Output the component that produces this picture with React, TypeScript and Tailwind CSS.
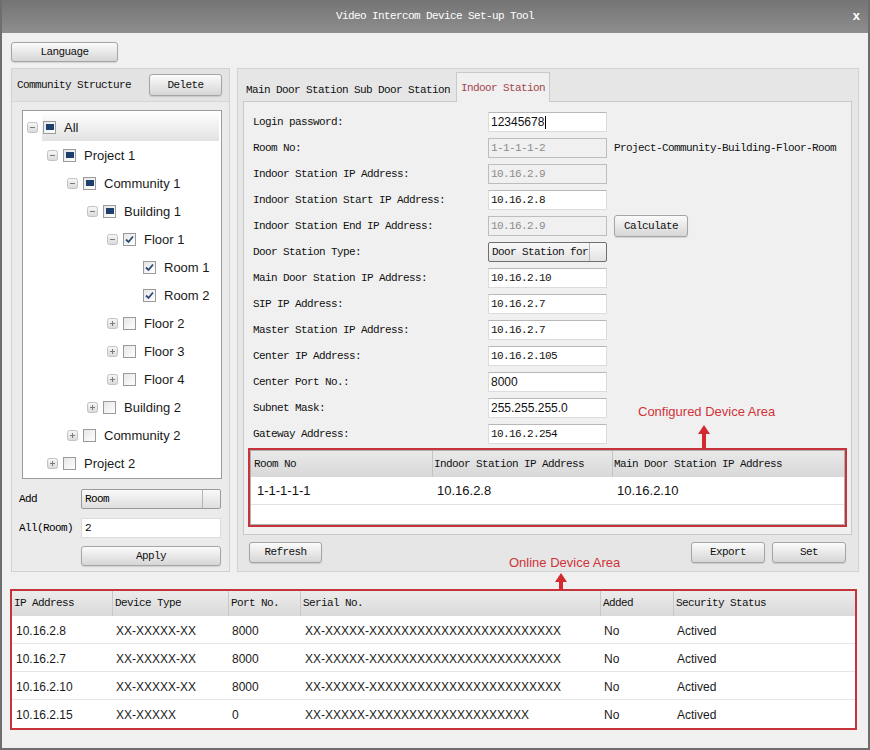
import React from "react";

const mono = "font-['Liberation_Mono',monospace] text-[11px] tracking-[-0.6px]";
const sans = "font-['Liberation_Sans',Arial,sans-serif]";

type Check = "partial" | "checked" | "none";

const tree: { level: number; label: string; exp: "-" | "+" | null; chk: Check; selected?: boolean }[] = [
  { level: 0, label: "All", exp: "-", chk: "partial", selected: true },
  { level: 1, label: "Project 1", exp: "-", chk: "partial" },
  { level: 2, label: "Community 1", exp: "-", chk: "partial" },
  { level: 3, label: "Building 1", exp: "-", chk: "partial" },
  { level: 4, label: "Floor 1", exp: "-", chk: "checked" },
  { level: 5, label: "Room 1", exp: null, chk: "checked" },
  { level: 5, label: "Room 2", exp: null, chk: "checked" },
  { level: 4, label: "Floor 2", exp: "+", chk: "none" },
  { level: 4, label: "Floor 3", exp: "+", chk: "none" },
  { level: 4, label: "Floor 4", exp: "+", chk: "none" },
  { level: 3, label: "Building 2", exp: "+", chk: "none" },
  { level: 2, label: "Community 2", exp: "+", chk: "none" },
  { level: 1, label: "Project 2", exp: "+", chk: "none" },
];

type Field = {
  label: string;
  value?: string;
  sansValue?: boolean;
  disabled?: boolean;
  cursor?: boolean;
  select?: boolean;
  note?: string;
  calc?: boolean;
};

const fields: Field[] = [
  { label: "Login password:", value: "12345678", sansValue: true, cursor: true },
  { label: "Room No:", value: "1-1-1-1-2", disabled: true, note: "Project-Community-Building-Floor-Room" },
  { label: "Indoor Station IP Address:", value: "10.16.2.9", disabled: true },
  { label: "Indoor Station Start IP Address:", value: "10.16.2.8" },
  { label: "Indoor Station End IP Address:", value: "10.16.2.9", disabled: true, calc: true },
  { label: "Door Station Type:", select: true },
  { label: "Main Door Station IP Address:", value: "10.16.2.10" },
  { label: "SIP IP Address:", value: "10.16.2.7" },
  { label: "Master Station IP Address:", value: "10.16.2.7" },
  { label: "Center IP Address:", value: "10.16.2.105" },
  { label: "Center Port No.:", value: "8000", sansValue: true },
  { label: "Subnet Mask:", value: "255.255.255.0", sansValue: true },
  { label: "Gateway Address:", value: "10.16.2.254" },
];

const online = [
  { ip: "10.16.2.8", type: "XX-XXXXX-XX", port: "8000", serial: "XX-XXXXX-" + "X".repeat(24) },
  { ip: "10.16.2.7", type: "XX-XXXXX-XX", port: "8000", serial: "XX-XXXXX-" + "X".repeat(24) },
  { ip: "10.16.2.10", type: "XX-XXXXX-XX", port: "8000", serial: "XX-XXXXX-" + "X".repeat(24) },
  { ip: "10.16.2.15", type: "XX-XXXXX", port: "0", serial: "XX-XXXXX-" + "X".repeat(20) },
];

function Btn({ children, className = "" }: { children: React.ReactNode; className?: string }) {
  return (
    <div
      className={`flex items-center justify-center rounded-[3px] border border-[#a5a5a5] bg-linear-to-b from-[#fbfbfb] to-[#d6d6d6] text-[#111] shadow-[0_1px_1px_rgba(0,0,0,0.12)] ${mono} ${className}`}
    >
      {children}
    </div>
  );
}

function Expander({ kind }: { kind: "-" | "+" | null }) {
  if (!kind) return <div className="w-[11px] h-[11px]" />;
  return (
    <svg width="11" height="11" viewBox="0 0 11 11" className="shrink-0">
      <defs>
        <linearGradient id="expg" x1="0" y1="0" x2="0" y2="1">
          <stop offset="0" stopColor="#f8f8f8" />
          <stop offset="1" stopColor="#d9d9d9" />
        </linearGradient>
      </defs>
      <rect x="0.5" y="0.5" width="10" height="10" rx="2" fill="url(#expg)" stroke="#c2c2c2" />
      <line x1="3" y1="5.5" x2="8" y2="5.5" stroke="#7a7a7a" strokeWidth="1" />
      {kind === "+" && <line x1="5.5" y1="3" x2="5.5" y2="8" stroke="#7a7a7a" strokeWidth="1" />}
    </svg>
  );
}

function CheckBox({ state }: { state: Check }) {
  return (
    <div className="relative flex h-[13px] w-[13px] shrink-0 items-center justify-center border border-[#9a9a9a] bg-linear-to-br from-[#e6e6e6] to-white">
      {state === "partial" && <div className="h-[6px] w-[8px] bg-[#1d3f6e]" />}
      {state === "checked" && (
        <svg width="11" height="11" viewBox="0 0 11 11">
          <path d="M2 5.5 L4.5 8 L9 2.5" fill="none" stroke="#2b4a78" strokeWidth="1.8" />
        </svg>
      )}
    </div>
  );
}

function Input({ f }: { f: Field }) {
  if (f.select) {
    return (
      <div className="flex h-[20px] w-[119px] items-center rounded-[2px] border border-[#6f6f6f] bg-linear-to-b from-[#f9f9f9] to-[#e3e3e3]">
        <span className={`flex-1 pl-[3px] text-[#111] ${mono}`}>Door Station for</span>
        <div className="h-full w-[17px] border-l border-[#b5b5b5]" />
      </div>
    );
  }
  return (
    <div
      className={`flex h-[20px] w-[119px] items-center border pl-[2px] ${
        f.disabled ? "border-[#bdbdbd] bg-[#f0f0f0] text-[#8c8c8c]" : "border-[#dcdcdc] border-t-[#b8b8b8] bg-white text-[#111]"
      } ${f.sansValue ? `${sans} text-[12px]` : mono}`}
    >
      {f.value}
      {f.cursor && <span className="ml-[1px] h-[13px] w-px bg-black" />}
    </div>
  );
}

function UpArrow({ h }: { h: number }) {
  return (
    <svg width="12" height={h} viewBox={`0 0 12 ${h}`}>
      <polygon points={`6,0 12,9 0,9`} fill="#d32a2f" />
      <rect x="4" y="8" width="4" height={h - 8} fill="#d32a2f" />
    </svg>
  );
}

export default function App() {
  return (
    <div className={`relative h-[750px] w-[870px] overflow-hidden border-x-2 border-b-2 border-[#6e6e6e] bg-[#f0f0f0] ${sans}`}>
      {/* title bar */}
      <div className="relative flex h-[33px] items-center justify-center bg-linear-to-b from-[#747474] to-[#8e8e8e]">
        <span className={`text-white ${mono}`}>Video Intercom Device Set-up Tool</span>
        <span className="absolute right-[8px] top-[9px] text-[13px] font-bold leading-none text-white">x</span>
      </div>

      <div className="px-[9px]">
        <Btn className="mt-[9px] h-[20px] w-[107px]">Language</Btn>

        <div className="mt-[6px] flex h-[504px] gap-[7px]">
          {/* left panel */}
          <div className="flex w-[219px] flex-col border border-[#d2d2d2] bg-[#ebebeb]">
            <div className="flex h-[33px] items-center justify-between border-b border-[#d6d6d6] bg-[#e3e3e3] pl-[5px] pr-[7px]">
              <span className={`text-[#111] ${mono}`}>Community Structure</span>
              <Btn className="h-[22px] w-[73px]">Delete</Btn>
            </div>
            <div className="ml-[10px] mt-[8px] h-[369px] w-[200px] border border-[#9c9c9c] bg-white pt-[2px]">
              {tree.map((t) => (
                <div key={t.label} className="flex h-[28px] items-center" style={{ paddingLeft: 4 + t.level * 20 }}>
                  <Expander kind={t.exp} />
                  <div
                    className={`ml-[4px] mr-[2px] flex h-full flex-1 items-center pl-px ${
                      t.selected ? "bg-linear-to-b from-[#fdfdfd] to-[#e2e2e2]" : ""
                    }`}
                  >
                    <CheckBox state={t.chk} />
                    <span className="ml-[8px] pt-[2px] text-[13px] text-[#1a1a1a]">{t.label}</span>
                  </div>
                </div>
              ))}
            </div>
            <div className="mt-[10px] flex items-center pl-[7px]">
              <span className={`w-[62px] ${mono}`}>Add</span>
              <div className="flex h-[20px] w-[140px] items-center rounded-[2px] border border-[#9a9a9a] bg-linear-to-b from-[#f9f9f9] to-[#dedede]">
                <span className={`flex-1 pl-[3px] ${mono}`}>Room</span>
                <div className="h-full w-[18px] border-l border-[#b5b5b5]" />
              </div>
            </div>
            <div className="mt-[9px] flex items-center pl-[7px]">
              <span className={`w-[62px] ${mono}`}>All(Room)</span>
              <div className={`flex h-[20px] w-[140px] items-center border border-[#dcdcdc] bg-white pl-[3px] ${mono}`}>2</div>
            </div>
            <div className="mt-[8px] pl-[69px]">
              <Btn className="h-[20px] w-[140px]">Apply</Btn>
            </div>
          </div>

          {/* right panel */}
          <div className="flex flex-1 flex-col border border-[#d2d2d2] bg-[#e6e6e6] pl-[5px] pr-[6px] pt-[3px]">
            <div className="flex h-[29px] items-end">
              <span className={`px-[3px] pb-[3px] text-[#111] ${mono}`}>Main Door Station</span>
              <span className={`px-[3px] pb-[3px] text-[#111] ${mono}`}>Sub Door Station</span>
              <span
                className={`relative z-10 ml-[3px] -mb-px flex h-[30px] items-center border border-b-0 border-[#cacaca] bg-[#f0f0f0] px-[4px] pt-[2px] text-[#a3474c] ${mono}`}
              >
                Indoor Station
              </span>
            </div>
            <div className="flex h-[434px] flex-col border border-[#c9c9c9] bg-[#f0f0f0] pt-[7px]">
              {fields.map((f) => (
                <div key={f.label} className="flex h-[26px] items-center pl-[9px]">
                  <span className={`w-[235px] text-[#111] ${mono}`}>{f.label}</span>
                  <Input f={f} />
                  {f.note && <span className={`ml-[7px] text-[#111] ${mono}`}>{f.note}</span>}
                  {f.calc && <Btn className="ml-[7px] h-[22px] w-[74px]">Calculate</Btn>}
                </div>
              ))}

              {/* configured devices */}
              <div className="mx-[4px] mt-[1px] h-[79px] border-2 border-[#c6333b] bg-white">
                <div className="h-full border border-[#b0b0b0]">
                  <div className="grid h-[26px] grid-cols-[181px_180px_1fr] bg-linear-to-b from-[#e9e9e9] to-[#d8d8d8] text-[#111]">
                    <div className={`flex items-center pl-[3px] ${mono}`}>Room No</div>
                    <div className={`flex items-center border-l border-[#c4c4c4] pl-px ${mono}`}>Indoor Station IP Address</div>
                    <div className={`mr-[6px] flex items-center border-l border-[#c4c4c4] pl-px ${mono}`}>Main Door Station IP Address</div>
                  </div>
                  <div className="grid h-[28px] grid-cols-[181px_180px_1fr] border-b border-[#e2e2e2] text-[13px] text-[#111]">
                    <div className="flex items-center pl-[6px]">1-1-1-1-1</div>
                    <div className="flex items-center pl-[5px]">10.16.2.8</div>
                    <div className="flex items-center pl-[5px]">10.16.2.10</div>
                  </div>
                </div>
              </div>
            </div>
            <div className="mt-[7px] flex items-center pl-[6px] pr-[6px]">
              <Btn className="h-[21px] w-[73px]">Refresh</Btn>
              <div className="flex-1" />
              <Btn className="h-[21px] w-[74px]">Export</Btn>
              <Btn className="ml-[7px] h-[21px] w-[74px]">Set</Btn>
            </div>
          </div>
        </div>

        {/* online devices */}
        <div className="-ml-px mt-[17px] w-[847px] border-2 border-[#c6333b] bg-white">
          <div className="grid h-[25px] grid-cols-[100px_116px_72px_300px_73px_1fr] bg-linear-to-b from-[#ececec] to-[#d9d9d9] text-[#111]">
            {["IP Address", "Device Type", "Port No.", "Serial No.", "Added", "Security Status"].map((h, i) => (
              <div key={h} className={`flex items-center pl-[2px] ${i > 0 ? "border-l border-[#c8c8c8]" : ""} ${mono}`}>
                {h}
              </div>
            ))}
          </div>
          {online.map((r) => (
            <div
              key={r.ip}
              className="grid h-[28px] grid-cols-[100px_116px_72px_300px_73px_1fr] border-b border-[#e4e4e4] pt-[2px] text-[12px] text-[#1a1a1a] last:border-b-0"
            >
              <div className="flex items-center pl-[4px]">{r.ip}</div>
              <div className="flex items-center pl-[4px]">{r.type}</div>
              <div className="flex items-center pl-[4px]">{r.port}</div>
              <div className="flex items-center pl-[5px]">{r.serial}</div>
              <div className="flex items-center pl-[4px]">No</div>
              <div className="flex items-center pl-[4px]">Actived</div>
            </div>
          ))}
        </div>
      </div>

      {/* annotations */}
      <span className="absolute left-[636px] top-[405px] text-[13px] leading-none text-[#d0343a]">Configured Device Area</span>
      <div className="absolute left-[696px] top-[425px] leading-none">
        <UpArrow h={23} />
      </div>
      <span className="absolute left-[507px] top-[556px] text-[13px] leading-none text-[#d0343a]">Online Device Area</span>
      <div className="absolute left-[553px] top-[573px] leading-none">
        <UpArrow h={17} />
      </div>
    </div>
  );
}
